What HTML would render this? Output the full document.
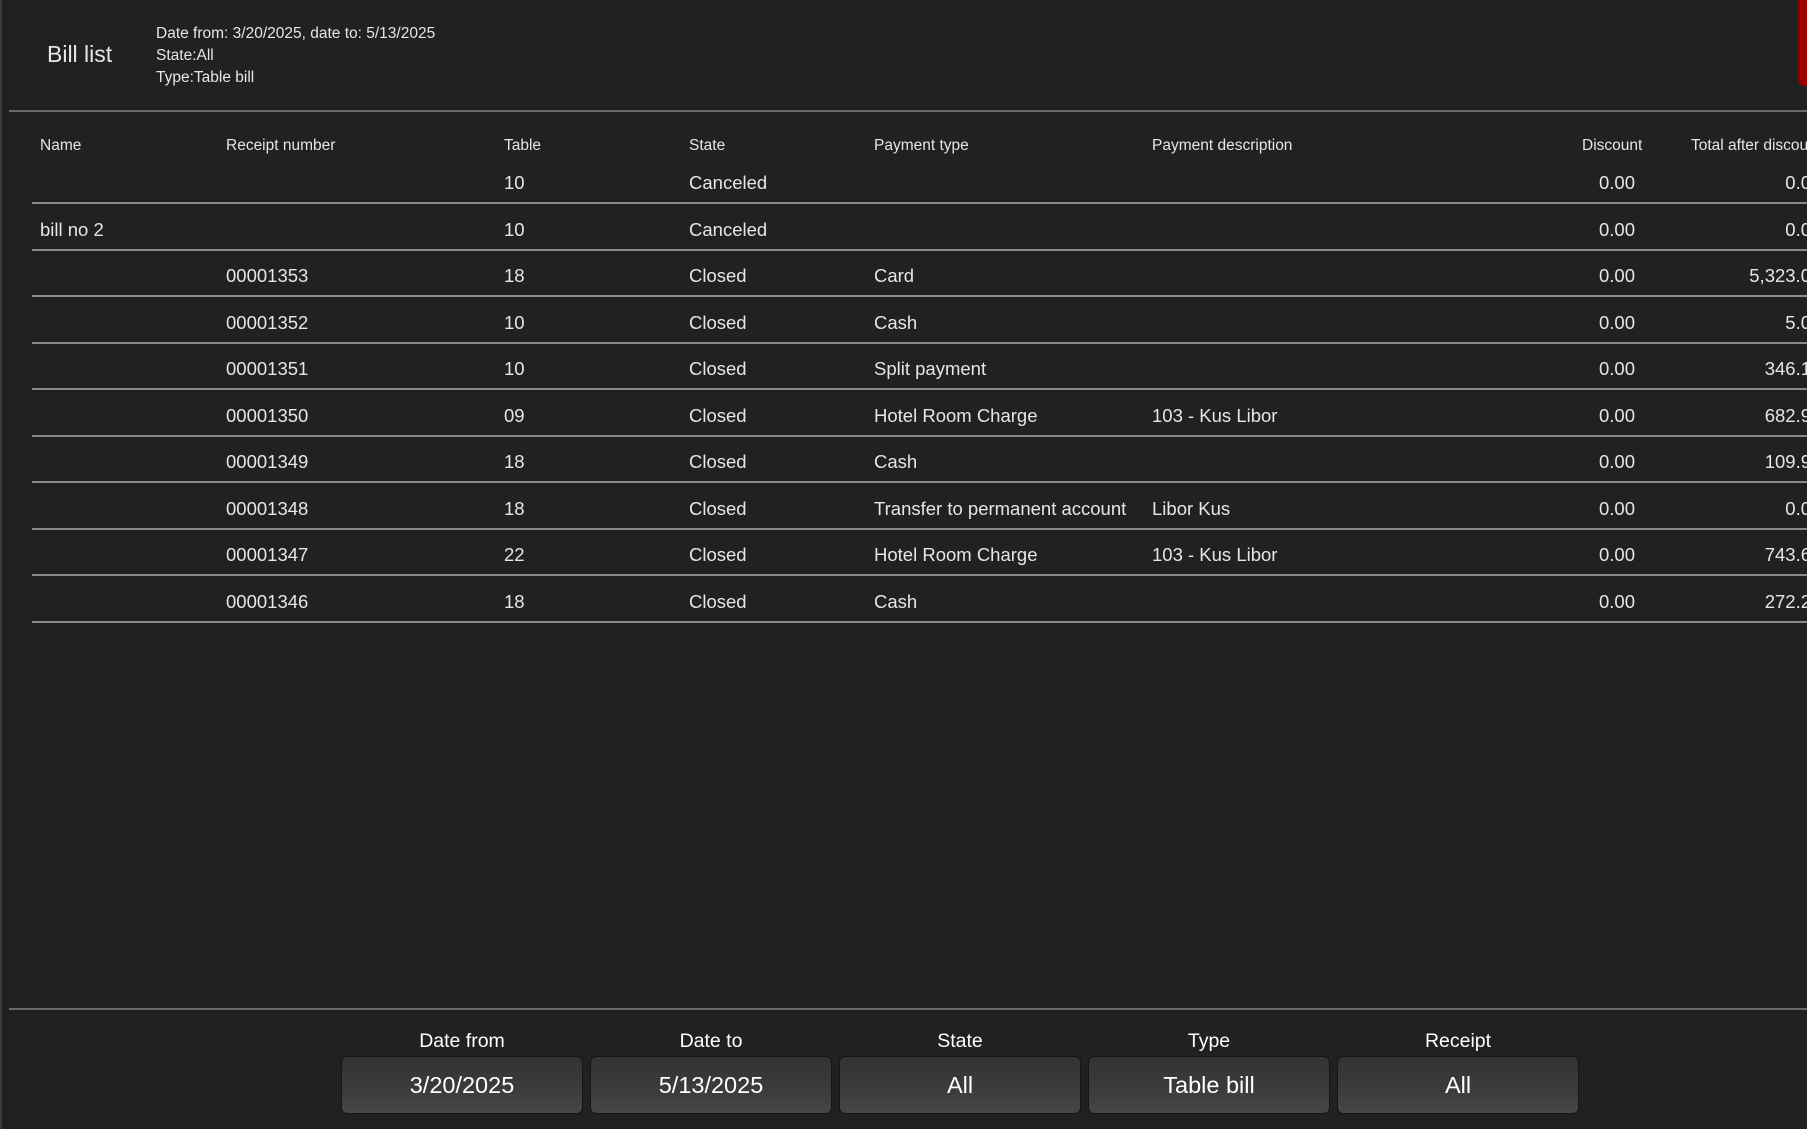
<!DOCTYPE html>
<html><head><meta charset="utf-8"><style>
*{margin:0;padding:0;box-sizing:border-box}
body{width:1807px;height:1129px;background:#212121;color:#e6e6e6;font-family:"Liberation Sans",sans-serif;position:relative;overflow:hidden}
.a{position:absolute;white-space:nowrap}
.lb{position:absolute;left:0;top:0;width:2px;height:1129px;background:#3a3a3a}
.sep{position:absolute;left:9px;right:0;height:2px;background:#6a6a6a}
.rl{position:absolute;left:32px;right:0;height:2px;background:#8a8a8a}
.h{font-size:15.5px;top:137px}
.r{font-size:18.5px}
.btn{position:absolute;top:1056px;width:242px;height:58px;border:1px solid #151515;border-radius:6px;background:linear-gradient(#333,#3c3c3c 60%,#474747);color:#fff;font-size:23.5px;text-align:center;line-height:56px}
.lab{position:absolute;top:1030px;width:242px;text-align:center;font-size:19.5px;color:#fff}
</style></head><body>
<div class="lb"></div>
<div class="a" style="left:47px;top:41px;font-size:23px">Bill list</div>
<div class="a" style="left:156px;top:23px;font-size:15.5px;line-height:22px">Date from: 3/20/2025, date to: 5/13/2025<br>State:All<br>Type:Table bill</div>
<div class="a" style="left:1798px;top:0;width:12px;height:86px;background:linear-gradient(90deg,#8a0000,#b00000);border-radius:0 0 0 6px"></div>
<div class="sep" style="top:110px"></div>
<div class="a h" style="left:40px">Name</div>
<div class="a h" style="left:226px">Receipt number</div>
<div class="a h" style="left:504px">Table</div>
<div class="a h" style="left:689px">State</div>
<div class="a h" style="left:874px">Payment type</div>
<div class="a h" style="left:1152px">Payment description</div>
<div class="a h" style="left:1582px">Discount</div>
<div class="a h" style="left:1691px">Total after discount</div>
<div id="rows"></div>
<script>
var d=[["","","10","Canceled","","","0.0"],["bill no 2","","10","Canceled","","","0.0"],["","00001353","18","Closed","Card","","5,323.0"],["","00001352","10","Closed","Cash","","5.0"],["","00001351","10","Closed","Split payment","","346.1"],["","00001350","09","Closed","Hotel Room Charge","103 - Kus Libor","682.9"],["","00001349","18","Closed","Cash","","109.9"],["","00001348","18","Closed","Transfer to permanent account","Libor Kus","0.0"],["","00001347","22","Closed","Hotel Room Charge","103 - Kus Libor","743.6"],["","00001346","18","Closed","Cash","","272.2"]];
var cx=[40,226,504,689,874,1152],h="";
d.forEach(function(r,i){var c=182+i*46.5;var t=c-10;
for(var j=0;j<6;j++)if(r[j])h+='<div class="a r" style="left:'+cx[j]+'px;top:'+t+'px;'+(j==4?'width:262px;overflow:hidden':'')+'">'+r[j]+'</div>';
h+='<div class="a r" style="left:1590px;top:'+t+'px;width:45px;text-align:right">0.00</div>';
h+='<div class="a r" style="right:-4px;top:'+t+'px;text-align:right">'+r[6]+'</div>';
h+='<div class="rl" style="top:'+(c+20)+'px"></div>';});
document.getElementById('rows').innerHTML=h;
</script>
<div class="sep" style="top:1008px"></div>
<div class="lab" style="left:341px">Date from</div><div class="btn" style="left:341px">3/20/2025</div>
<div class="lab" style="left:590px">Date to</div><div class="btn" style="left:590px">5/13/2025</div>
<div class="lab" style="left:839px">State</div><div class="btn" style="left:839px">All</div>
<div class="lab" style="left:1088px">Type</div><div class="btn" style="left:1088px">Table bill</div>
<div class="lab" style="left:1337px">Receipt</div><div class="btn" style="left:1337px">All</div>
</body></html>
